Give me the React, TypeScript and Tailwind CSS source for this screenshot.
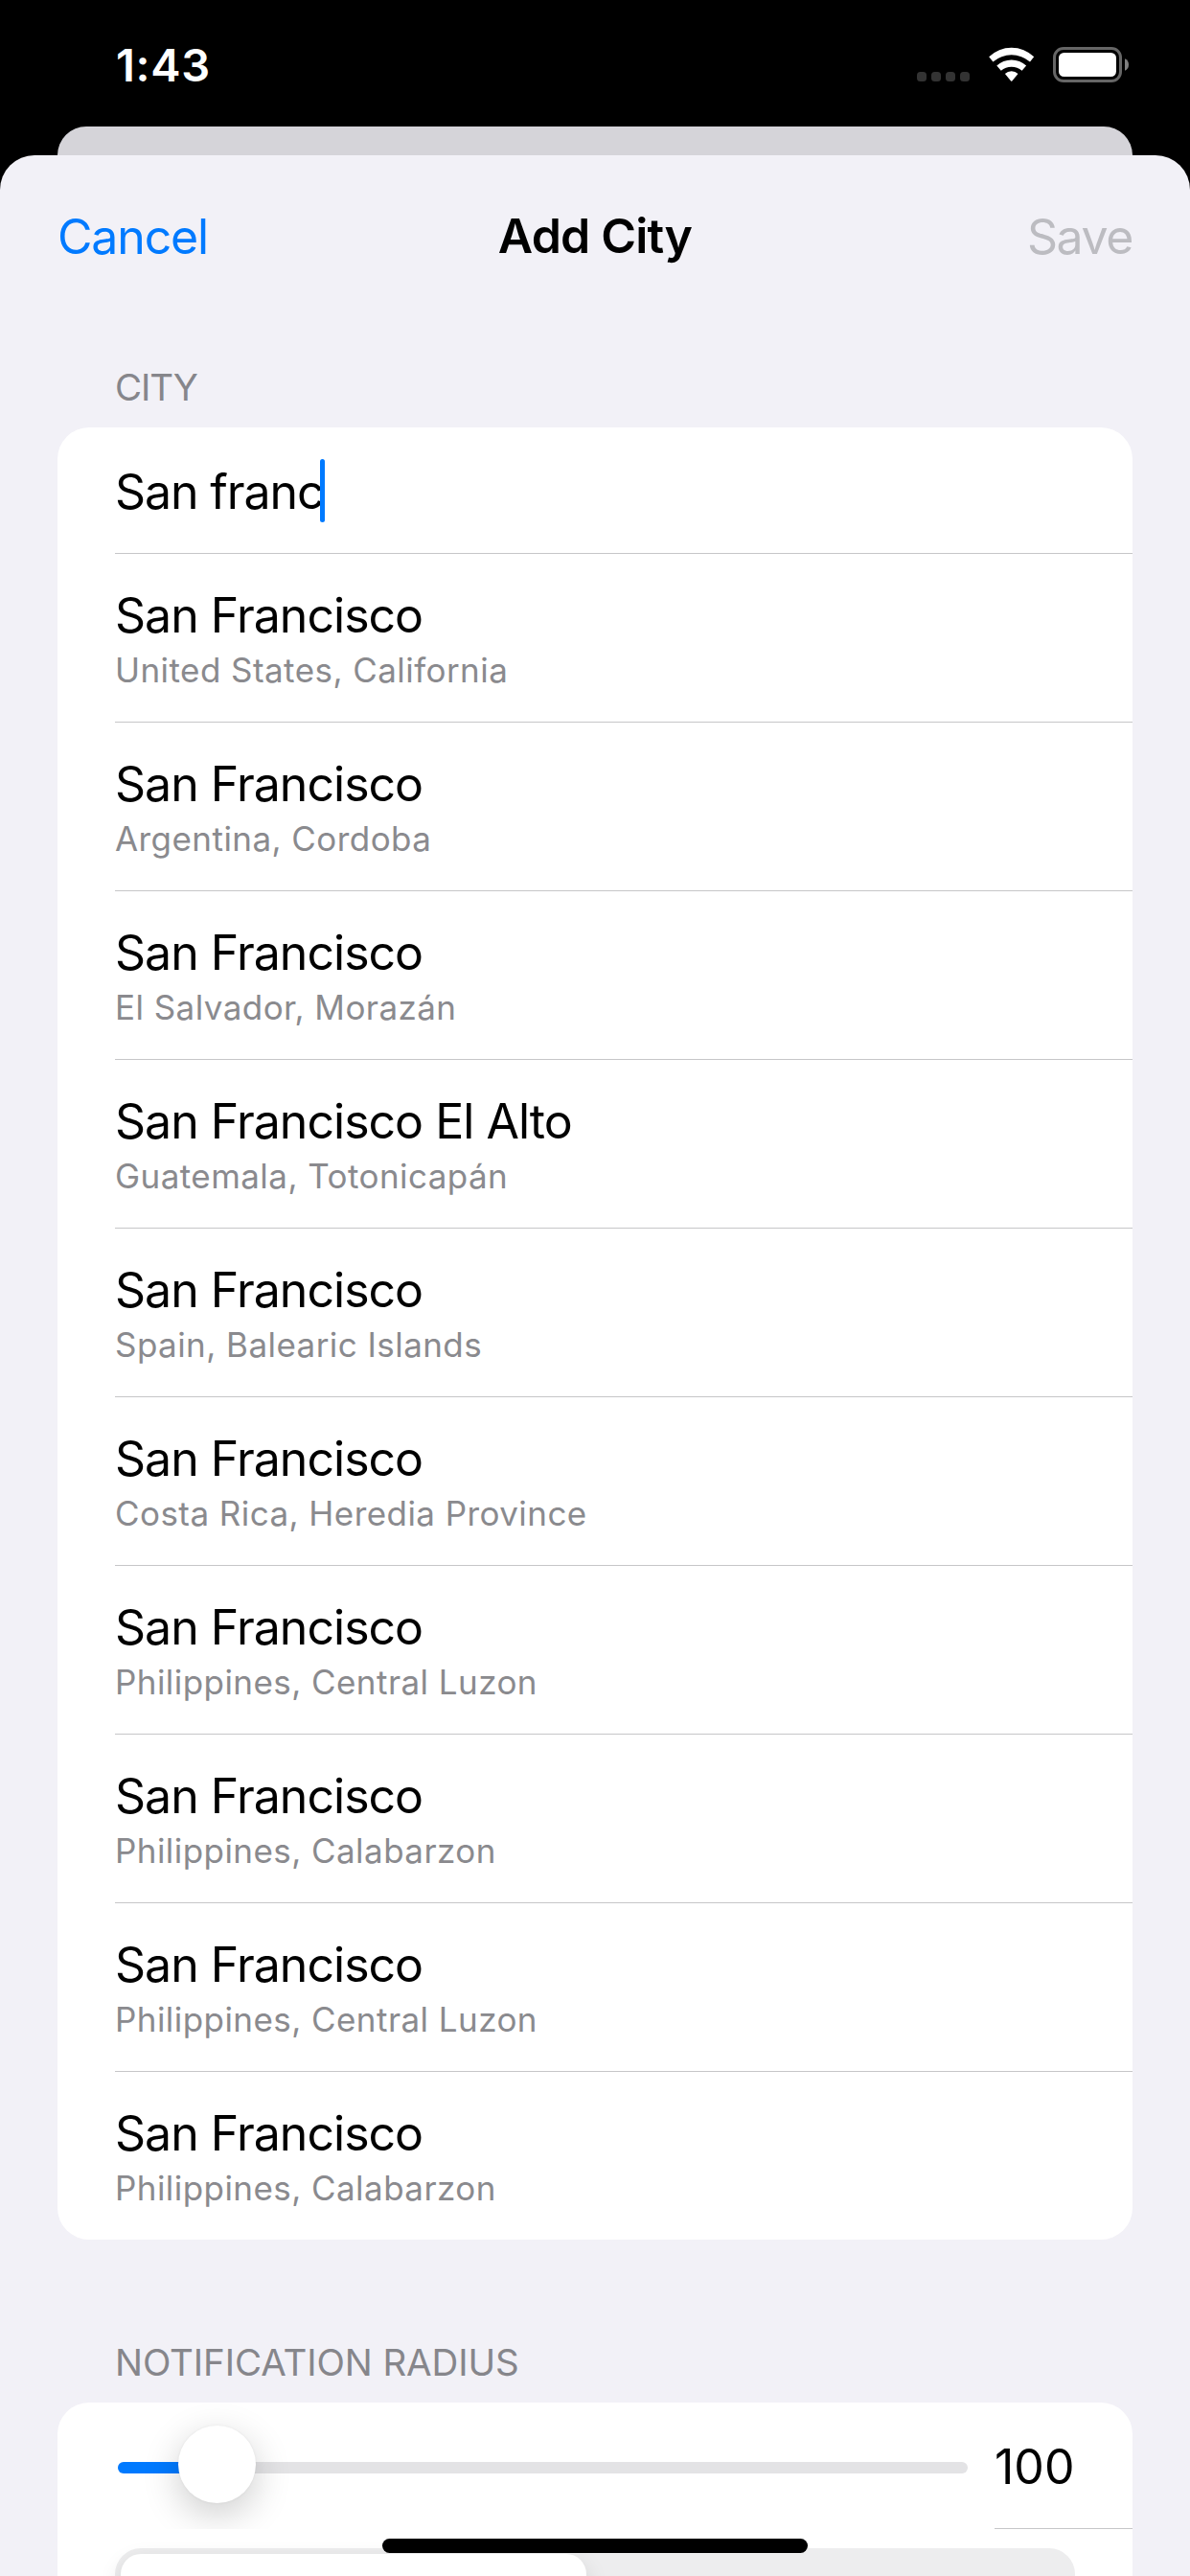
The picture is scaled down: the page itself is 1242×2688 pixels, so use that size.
const cities = [
  { name: "San Francisco", region: "United States, California" },
  { name: "San Francisco", region: "Argentina, Cordoba" },
  { name: "San Francisco", region: "El Salvador, Morazán" },
  { name: "San Francisco El Alto", region: "Guatemala, Totonicapán" },
  { name: "San Francisco", region: "Spain, Balearic Islands" },
  { name: "San Francisco", region: "Costa Rica, Heredia Province" },
  { name: "San Francisco", region: "Philippines, Central Luzon" },
  { name: "San Francisco", region: "Philippines, Calabarzon" },
  { name: "San Francisco", region: "Philippines, Central Luzon" },
  { name: "San Francisco", region: "Philippines, Calabarzon" },
];

function StatusBar() {
  return (
    <header className="flex h-[132px] items-start justify-between pl-[121px] pr-16 text-white">
      <span className="text-[47px] font-semibold leading-[136px] tracking-[0.7px]">1:43</span>
      <div className="flex pt-[49px]">
        <div className="mt-[26px] flex gap-[5px]">
          {[0, 1, 2, 3].map((dot) => (
            <span key={dot} className="size-[10px] rounded-[3.5px] bg-[#333333]" />
          ))}
        </div>
        <svg className="ml-5 h-9 w-12" viewBox="0 0 48 36" fill="currentColor">
          <path d="M0.2 10.3A33.7 33.7 0 0 1 47.2 10.3L43 15.4A30 30 0 0 0 4.4 15.4Z" />
          <path d="M8.3 19.4A22.7 22.7 0 0 1 39.1 19.4L34.6 24.8A17 17 0 0 0 12.8 24.8Z" />
          <path d="M16.9 28.1A9.7 9.7 0 0 1 30.5 28.1L24.3 35.5Q23.7 36.2 23.1 35.5Z" />
        </svg>
        <svg className="ml-[19px] h-[37px] w-[79px]" viewBox="0 0 79 37">
          <rect x="1.5" y="1.5" width="69" height="34" rx="9.5" fill="none" stroke="#666666" strokeWidth="3" />
          <rect x="6" y="6" width="60" height="25" rx="5.5" fill="#fff" />
          <path d="M75 12.2Q79 14 79 18.5T75 24.8Z" fill="#808080" />
        </svg>
      </div>
    </header>
  );
}

function NavBar() {
  return (
    <nav className="grid h-[170px] grid-cols-3 px-[60px] text-[50px] leading-[170px]">
      <span className="text-[#007aff] tracking-[-1.17px]">Cancel</span>
      <span className="text-center font-semibold leading-[168px] tracking-[-0.8px] text-black">Add City</span>
      <span className="text-right tracking-[-1.4px] text-[#bcbcc1]">Save</span>
    </nav>
  );
}

function CityRow({ name, region }: { name: string; region: string }) {
  return (
    <li className="h-[176px] border-t border-[#c6c6c8] pt-[34px]">
      <p className="text-[50px] leading-[60px] tracking-[-0.98px] text-black">{name}</p>
      <p className="mt-[3px] text-[35px] leading-[49px] tracking-[0.44px] text-[#8a8a8e]">{region}</p>
    </li>
  );
}

function RadiusSlider() {
  return (
    <div className="flex h-[132px]">
      <div className="flex w-[978px] items-center overflow-hidden pl-[63px] pr-7 pt-1">
        <div className="relative h-3 w-full rounded-full bg-[#e3e3e5]">
          <div className="h-3 w-[100px] rounded-full bg-[#007aff]" />
          <div className="absolute -top-[38px] left-[63px] size-[81px] rounded-full bg-white shadow-[0_12px_39px_rgba(0,0,0,0.2),0_0_3px_rgba(0,0,0,0.06)]" />
        </div>
      </div>
      <div className="flex-1 border-b border-[#c6c6c8] text-[50px] leading-[134px] text-black">100</div>
    </div>
  );
}

export default function App() {
  return (
    <main className="relative h-[2688px] w-[1242px] overflow-hidden bg-black font-['Inter',sans-serif]">
      <StatusBar />
      <div className="mx-[60px] h-[30px] rounded-t-[31px] bg-[#d5d4d9]" />
      <section className="h-[2526px] rounded-t-[36px] bg-[#f2f1f7]">
        <NavBar />

        <h2 className="mt-[42px] pl-[120px] text-[38.5px] leading-[60px] tracking-[-1.1px] text-[#86868b]">CITY</h2>
        <div className="mx-[60px] mt-3 rounded-[33px] bg-white pl-[60px]">
          <div className="flex h-[131px] items-center">
            <span className="pt-[3px] text-[50px] leading-[60px] tracking-[-1.1px] text-black">San franc</span>
            <span className="-ml-[3px] h-[66px] w-[5px] rounded-full bg-[#007aff]" />
          </div>
          <ul>
            {cities.map((city, index) => (
              <CityRow key={index} name={city.name} region={city.region} />
            ))}
          </ul>
        </div>

        <h2 className="mt-[98px] pl-[120px] text-[38.5px] leading-[60px] tracking-[-0.1px] text-[#86868b]">
          NOTIFICATION RADIUS
        </h2>
        <div className="mx-[60px] mt-3 h-[240px] rounded-t-[33px] bg-white">
          <RadiusSlider />
          <div className="mx-[60px] mt-5 flex h-24 rounded-[27px] bg-[#ededee] p-[6px]">
            <div className="w-[486px] rounded-[21px] bg-white shadow-[0_9px_24px_rgba(0,0,0,0.12)]" />
          </div>
        </div>
      </section>
      <div className="absolute bottom-6 left-[399px] h-[15px] w-[444px] rounded-full bg-black" />
    </main>
  );
}
